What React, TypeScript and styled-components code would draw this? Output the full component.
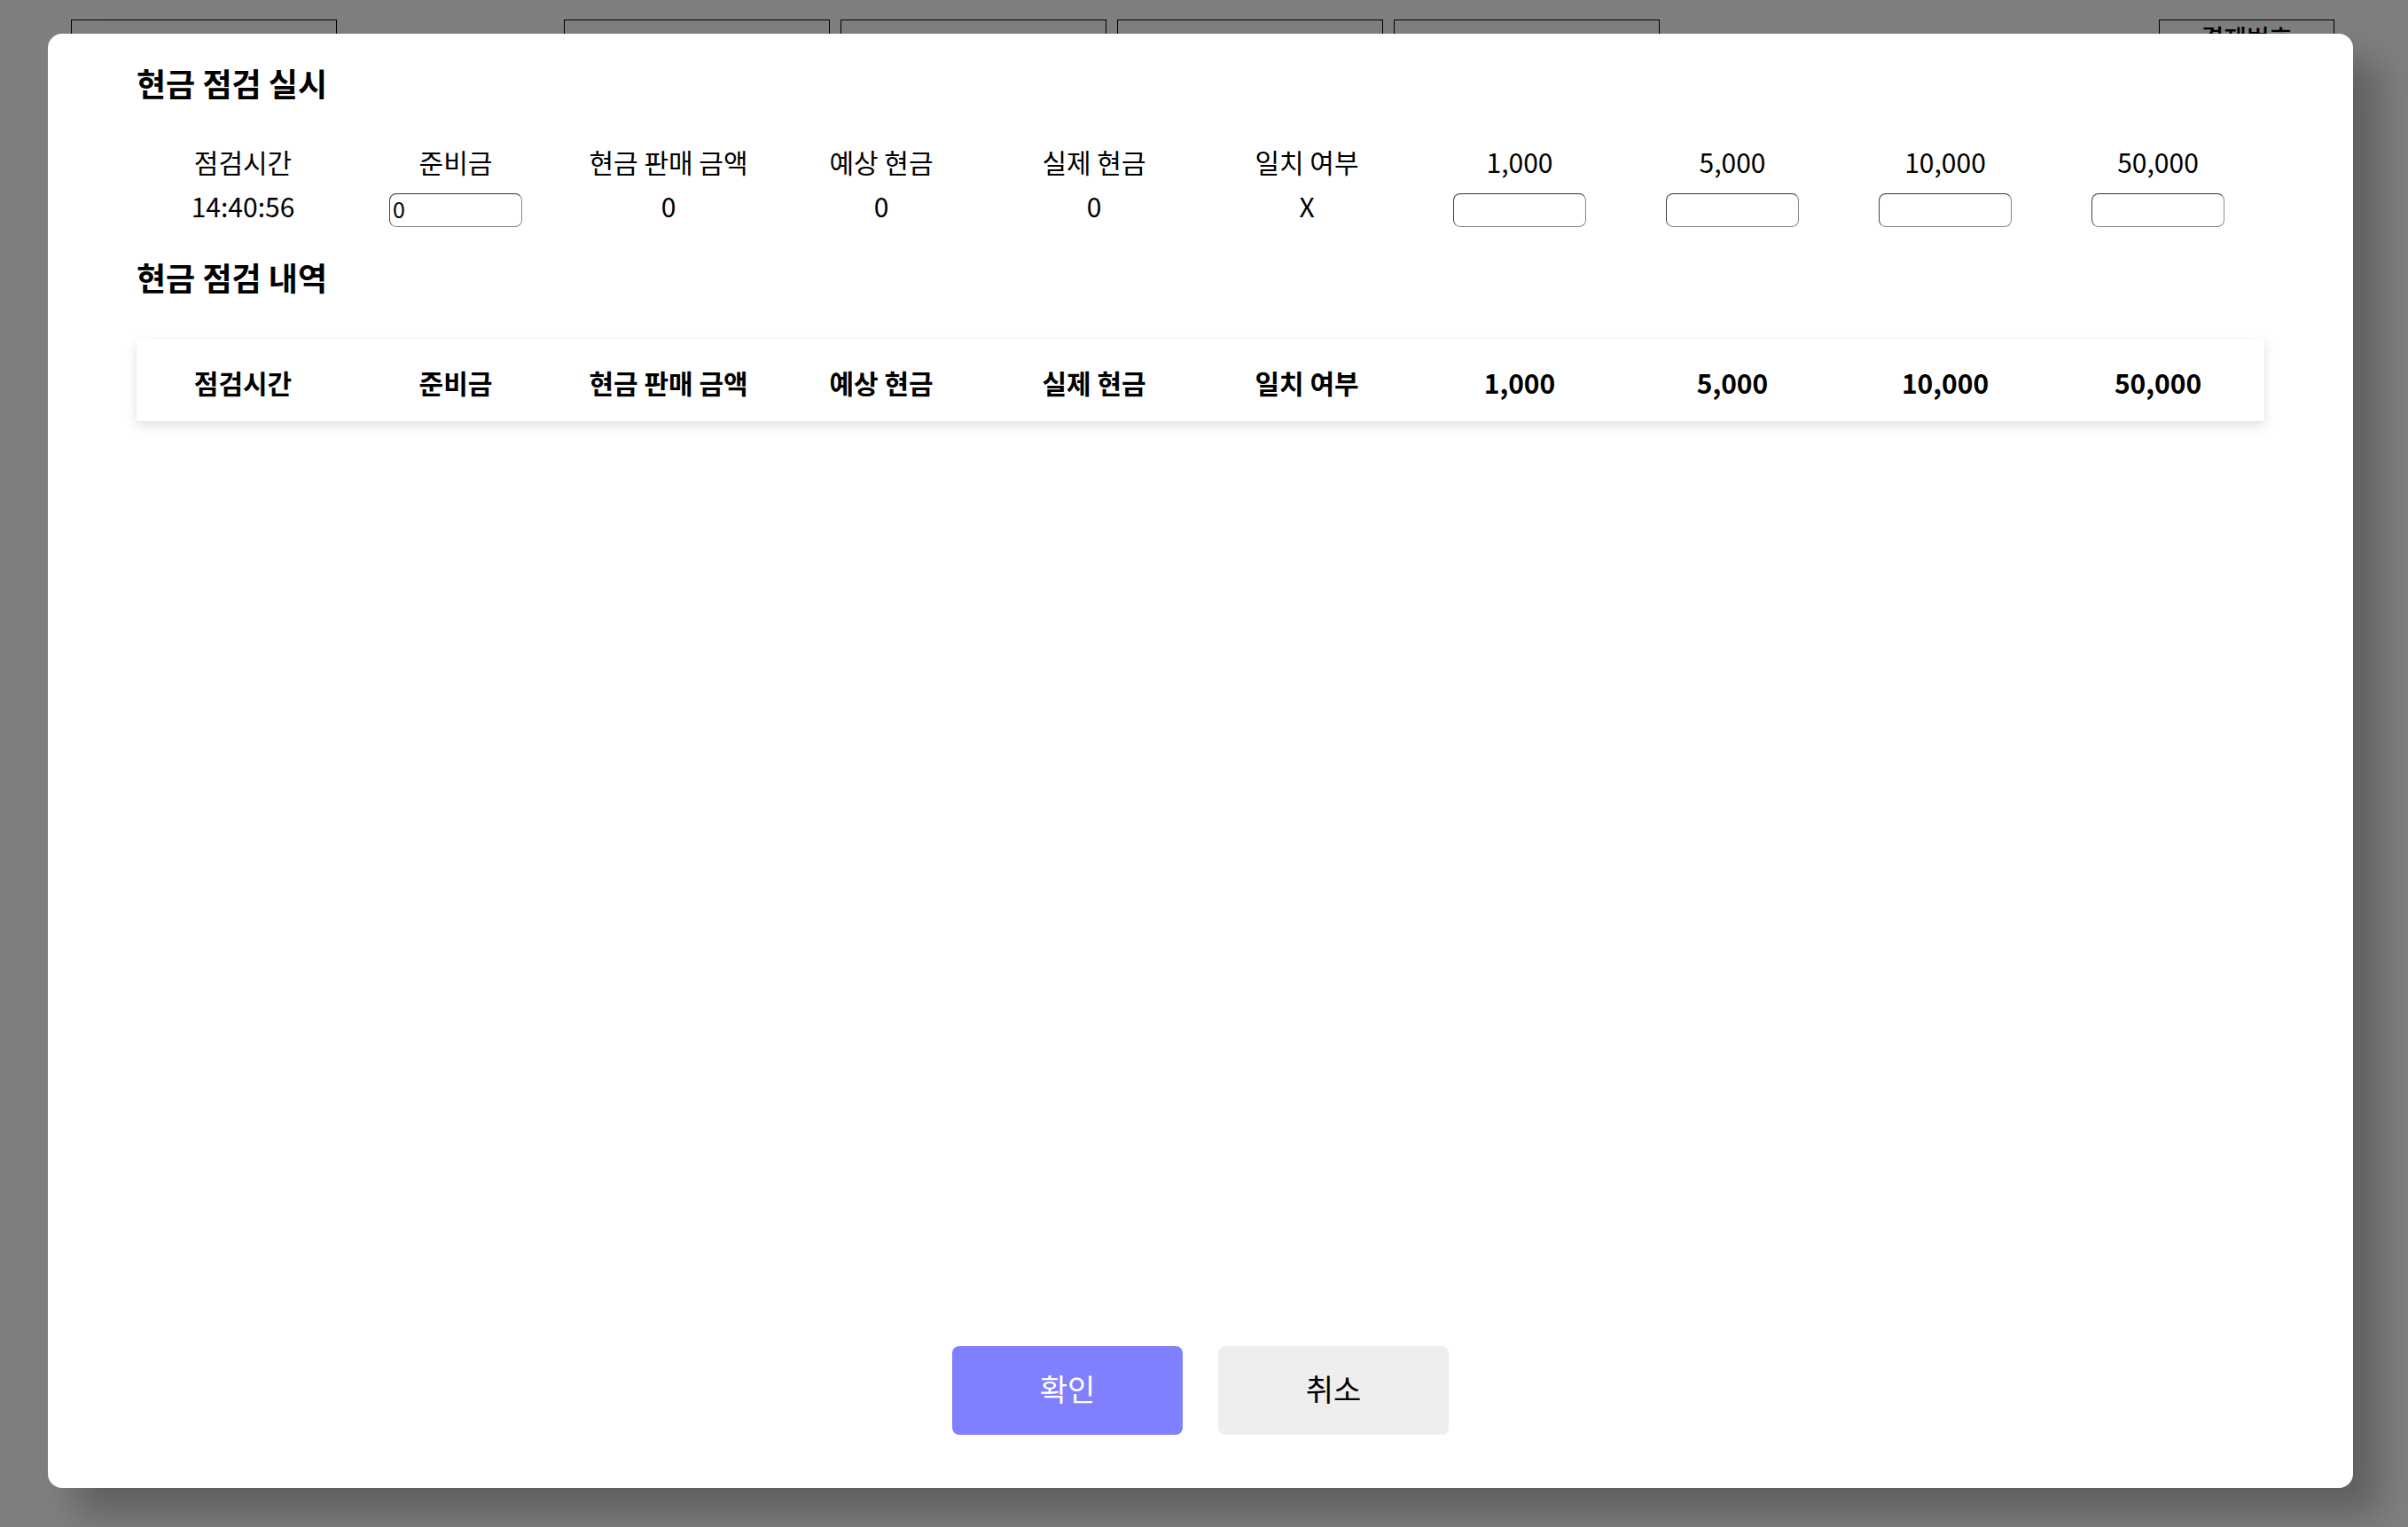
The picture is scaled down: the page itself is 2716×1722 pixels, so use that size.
import React from "react";
import styled, { createGlobalStyle } from "styled-components";

const GlobalStyle = createGlobalStyle`
  html, body {
    margin: 0;
    padding: 0;
    background: #ffffff;
    font-family: "Noto Sans CJK KR", "Noto Sans", sans-serif;
    color: #000;
  }
  * { box-sizing: border-box; }
`;

const Page = styled.div`
  width: 2716px;
  height: 1722px;
  position: relative;
  overflow: hidden;
  background: #ffffff;
`;

const TopBar = styled.div`
  display: flex;
  align-items: flex-start;
  gap: 12px;
  padding: 22px 83px 0 80px;
`;

const TopBox = styled.div<{ $w?: number }>`
  width: ${(p) => p.$w ?? 300}px;
  height: 60px;
  border: 1px solid #000;
  display: flex;
  justify-content: center;
  font-size: 28px;
  font-weight: 500;
  line-height: 34px;
  padding-top: 2px;
`;

const Spacer = styled.div<{ $w: number }>`
  width: ${(p) => p.$w}px;
  flex: none;
`;

const Push = styled.div`
  flex: 1;
`;

const Overlay = styled.div`
  position: absolute;
  inset: 0;
  background: rgba(0, 0, 0, 0.5);
  display: flex;
  align-items: flex-start;
  justify-content: flex-start;
  padding: 38px 0 0 54px;
`;

const Modal = styled.div`
  width: 2600px;
  height: 1640px;
  background: #ffffff;
  border-radius: 16px;
  box-shadow: 30px 30px 40px rgba(0, 0, 0, 0.25);
  padding: 30px 100px 60px 100px;
  display: flex;
  flex-direction: column;
`;

const SectionTitle = styled.h2<{ $mt?: number }>`
  margin: ${(p) => p.$mt ?? 0}px 0 0 0;
  font-size: 36px;
  font-weight: 700;
  line-height: 50px;
  height: 50px;
  white-space: nowrap;
`;

const InfoGrid = styled.div`
  margin-top: 44px;
  display: grid;
  grid-template-columns: repeat(10, 240px);
`;

const InfoCell = styled.div`
  display: flex;
  flex-direction: column;
  align-items: center;
  gap: 16px;
`;

const InfoLabel = styled.div`
  font-size: 30px;
  line-height: 40px;
  height: 40px;
  white-space: nowrap;
`;

const InfoValue = styled.div`
  height: 38px;
  display: flex;
  align-items: center;
  justify-content: center;
`;

const ValueText = styled.span`
  font-size: 30px;
  line-height: 38px;
  padding-bottom: 10px;
  white-space: nowrap;
`;

const AmountInput = styled.input`
  width: 150px;
  height: 38px;
  border-radius: 8px;
  border: 1px solid #8a8a8a;
  border-top-color: #333;
  border-left-color: #444;
  background: #fff;
  font-family: "Noto Sans CJK KR", "Noto Sans", sans-serif;
  font-size: 25px;
  padding: 0 3px 4px 3px;
  color: #000;
  outline: none;
`;

const TableHeader = styled.div`
  margin-top: 45px;
  height: 93px;
  padding-top: 29px;
  display: grid;
  grid-template-columns: repeat(10, 240px);
  background: #fff;
  box-shadow: 0 5px 12px rgba(0, 0, 0, 0.12), 0 0 3px rgba(0, 0, 0, 0.04);
`;

const HeaderCell = styled.div`
  text-align: center;
  font-size: 30px;
  font-weight: 700;
  line-height: 40px;
  white-space: nowrap;
`;

const Fill = styled.div`
  flex: 1;
`;

const ButtonRow = styled.div`
  display: flex;
  justify-content: center;
  gap: 40px;
`;

const ActionButton = styled.button<{ $primary?: boolean }>`
  width: 260px;
  height: 100px;
  border: none;
  border-radius: 8px;
  padding: 0 0 6px 0;
  background: ${(p) => (p.$primary ? "#8080ff" : "#eeeeee")};
  color: ${(p) => (p.$primary ? "#ffffff" : "#000000")};
  font-family: "Noto Sans CJK KR", "Noto Sans", sans-serif;
  font-size: 34px;
  font-weight: 400;
  cursor: pointer;
`;

const columns = [
  "점검시간",
  "준비금",
  "현금 판매 금액",
  "예상 현금",
  "실제 현금",
  "일치 여부",
  "1,000",
  "5,000",
  "10,000",
  "50,000",
];

type Val = { kind: "text"; v: string } | { kind: "input"; v: string };

const values: Val[] = [
  { kind: "text", v: "14:40:56" },
  { kind: "input", v: "0" },
  { kind: "text", v: "0" },
  { kind: "text", v: "0" },
  { kind: "text", v: "0" },
  { kind: "text", v: "X" },
  { kind: "input", v: "" },
  { kind: "input", v: "" },
  { kind: "input", v: "" },
  { kind: "input", v: "" },
];

export default function App() {
  return (
    <>
      <GlobalStyle />
      <Page>
        <TopBar>
          <TopBox />
          <Spacer $w={232} />
          <TopBox />
          <TopBox />
          <TopBox />
          <TopBox />
          <Push />
          <TopBox $w={198}>결제번호</TopBox>
        </TopBar>
        <Overlay>
          <Modal>
            <SectionTitle>현금 점검 실시</SectionTitle>
            <InfoGrid>
              {columns.map((c, i) => (
                <InfoCell key={c}>
                  <InfoLabel>{c}</InfoLabel>
                  <InfoValue>
                    {values[i].kind === "input" ? (
                      <AmountInput defaultValue={values[i].v} />
                    ) : (
                      <ValueText>{values[i].v}</ValueText>
                    )}
                  </InfoValue>
                </InfoCell>
              ))}
            </InfoGrid>
            <SectionTitle $mt={31}>현금 점검 내역</SectionTitle>
            <TableHeader>
              {columns.map((c) => (
                <HeaderCell key={c}>{c}</HeaderCell>
              ))}
            </TableHeader>
            <Fill />
            <ButtonRow>
              <ActionButton $primary>확인</ActionButton>
              <ActionButton>취소</ActionButton>
            </ButtonRow>
          </Modal>
        </Overlay>
      </Page>
    </>
  );
}
